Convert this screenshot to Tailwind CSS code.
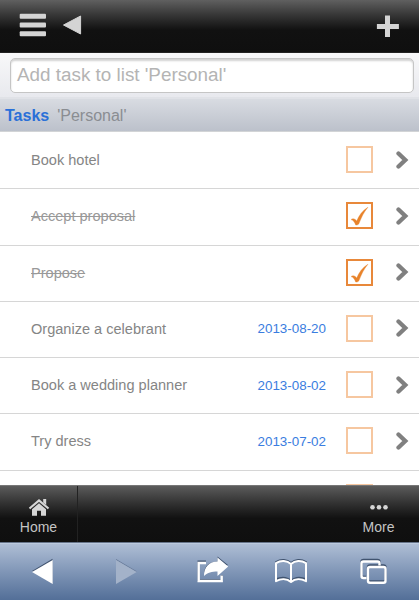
<!DOCTYPE html>
<html lang="en">
<head>
<meta charset="utf-8">
<title>Tasks</title>
<script src="https://cdn.jsdelivr.net/npm/@tailwindcss/browser@4"></script>
</head>
<body class="h-[600px] w-[419px] overflow-hidden bg-white font-['Liberation_Sans',Arial,sans-serif] text-[#858585]">
<svg class="hidden">
  <symbol id="chev" viewBox="0 0 13 18"><path d="M2.500 2.500 9.300 9l-6.800 6.500" fill="none" stroke="#808080" stroke-width="4.300" stroke-linecap="round" stroke-linejoin="miter"/></symbol>
  <symbol id="check" viewBox="0 0 27 27"><path d="M5.100 17.600c1.500-1.400 3.800-1 5.600 1.500C13 13.500 16.500 8.500 21.900 5.300 17.800 10 15.500 15.300 12.700 22c-.8.900-2.100 1.100-3 1C8.600 20 7.500 18.500 5.100 17.600Z" fill="#e8832b" stroke="#e8832b" stroke-width=".4"/></symbol>
</svg>
<div class="flex h-full flex-col">
  <header class="flex h-[53px] shrink-0 items-start border-b border-[#222] bg-linear-to-b from-[#606060] from-0% via-[#111] via-58% to-[#0f0f0f] pt-[13px]">
    <svg class="ml-[19px] h-6 w-7 shrink-0" viewBox="0 0 28 24" fill="#d4d4d4"><rect x=".7" y=".8" width="26.300" height="5" rx="1"/><rect x=".7" y="9.600" width="26.300" height="5" rx="1"/><rect x=".7" y="18.300" width="26.300" height="5" rx="1"/></svg>
    <svg class="ml-[15px] h-6 w-5 shrink-0" viewBox="0 0 20 24"><path d="M1.500 12 18.600 3v18Z" fill="#d4d4d4" stroke="#d4d4d4" stroke-linejoin="round"/></svg>
    <svg class="mr-5 ml-auto h-6 w-[23px]" viewBox="0 0 23 24"><path d="M11.500 2.500v22M.9 13.500h22" transform="translate(0 -.1)" fill="none" stroke="#d4d4d4" stroke-width="5"/></svg>
  </header>
  <div class="h-11 shrink-0 bg-linear-to-b from-[#f8f8f9] to-[#e8e9ee] px-[10px] pt-[5px] pr-[5px]">
    <div class="flex h-[35px] items-center rounded-[5px] border border-[#c5c5c5] bg-white pl-[6px] text-[18.850px] text-[#b4b4b4] shadow-[inset_0_2px_2px_rgba(0,0,0,0.18)]"><span class="whitespace-nowrap">Add task to list 'Personal'</span></div>
  </div>
  <div class="flex h-[35px] shrink-0 items-center gap-[8px] border-b border-[#d2d4d6] bg-linear-to-b from-[#dadde3] to-[#bcc1cb] pt-[3px] pl-[5px] text-[16px] shadow-[inset_0_2px_0_#e0e2e7]"><b class="text-[#2a70d8]">Tasks</b><span class="text-[#8a8d92]">'Personal'</span></div>
  <main class="flex-1 overflow-hidden pt-px">
    <div id="tasks"></div>
  </main>
  <nav class="flex h-[57px] shrink-0 justify-between border-t border-[#777] bg-linear-to-b from-[#5c5c5c] from-0% via-[#111] via-58% to-[#0f0f0f] text-[14px] leading-4 text-[#c4c4c4]">
    <div class="flex w-[78px] flex-col items-center border-r border-[#222] pt-[13px]">
      <svg class="h-[18px] w-[22px]" viewBox="0 0 22 18"><path d="M1.500 9.500 11 1.500l9.500 8" fill="none" stroke="#d6d6d6" stroke-width="2.200"/><path d="M15.200 0h3v6l-3-2.500ZM11 4.200l7 6v6.600h-5v-5H9v5H4v-6.600Z" fill="#d6d6d6"/></svg>
      <span class="mt-[2px]">Home</span>
    </div>
    <div class="flex w-[81px] flex-col items-center pt-[13px]">
      <svg class="h-[18px] w-[22px]" viewBox="0 0 22 18" fill="#d6d6d6"><circle cx="4.500" cy="8.200" r="2.300"/><circle cx="11" cy="8.200" r="2.300"/><circle cx="17.500" cy="8.200" r="2.300"/></svg>
      <span class="mt-[2px]">More</span>
    </div>
  </nav>
  <footer class="h-[58px] shrink-0 border-t border-[#66748a] bg-linear-to-b from-[#b0bfd6] to-[#536f98] shadow-[inset_0_1px_0_#bccade]">
    <svg class="h-[57px] w-[419px]" viewBox="0 543 419 57">
      <path d="M32 571 52.500 558.700V583" fill="#40536f"/><path d="M32 572 52.700 560v24Z" fill="#fff"/>
      <path d="M116 559v1l20 12 .7-.8Z" fill="#687b99"/><path d="M116 560v24l20.700-12Z" fill="#a3b2c9"/>
      <path d="M206 561.500h-7.500v18.500h23.500v-5" fill="none" stroke="#40536f" stroke-width="2"/><path d="M204 573c1-8 6-11.500 13.500-11.500V556.500L228 565" fill="#40536f"/><path d="M206 563h-7.300v18h23v-5.500" fill="none" stroke="#fff" stroke-width="2.400"/><path d="M204 576c0-9 5-14.500 13.500-14.500v-4l10.700 9-10.700 9.500v-4.500c-6 0-9.500 1-13.500 4.500Z" fill="#fff"/>
      <g fill="none" stroke-linejoin="round"><path d="M291 563c-4-3.500-10-4-15-.8v17c5-2 11-2 15 1.800 4-3.800 10-3.800 15-1.800v-17c-5-3.200-11-2.700-15 .8v17" stroke="#40536f" stroke-width="2"/><path d="M291 564c-4-3.500-10-4-15-.8v18c5-2.700 11-2.700 15 .8 4-3.500 10-3.500 15-.8v-18c-5-3.200-11-2.700-15 .8v17" stroke="#fff" stroke-width="2"/></g>
      <g fill="none" stroke-width="2.400"><path d="M366 577h-2.500q-2 0-2-2v-13q0-2 2-2h14q2 0 2 2v2" stroke="#40536f"/><rect x="368" y="565.500" width="17.500" height="16" rx="2" stroke="#40536f"/><path d="M366.500 578h-3q-2 0-2-2v-12.500q0-2 2-2h14q2 0 2 2v2" stroke="#fff"/><rect x="368" y="567" width="17.500" height="15.800" rx="2" stroke="#fff"/></g>
    </svg>
  </footer>
</div>
<script>
const tasks = [["Book hotel","",0],["Accept proposal","",1],["Propose","",1],["Organize a celebrant","2013-08-20",0],["Book a wedding planner","2013-08-02",0],["Try dress","2013-07-02",0],["","",0]];
document.getElementById("tasks").innerHTML = tasks.map(([name, date, done]) => `
<div class="flex h-[56.250px] items-center border-b-[1.500px] border-[#d6d6d6] pr-[10px] pl-[31px]">
  <span class="pt-px text-[14.550px] ${done ? "line-through text-[#999]" : ""}">${name}</span>
  <span class="ml-auto text-[13.400px] text-[#3a7de0]">${date}</span>
  <span class="mb-[2px] ml-5 size-[27px] shrink-0 border-2 ${done ? "border-[#e8883a]" : "border-[#f6c7a0]"}">${done ? '<svg class="-m-[2px] size-[27px] max-w-none"><use href="#check"/></svg>' : ""}</span>
  <svg class="mb-[2px] ml-[23px] h-[18px] w-[13px] shrink-0"><use href="#chev"/></svg>
</div>`).join("");
</script>
</body>
</html>
